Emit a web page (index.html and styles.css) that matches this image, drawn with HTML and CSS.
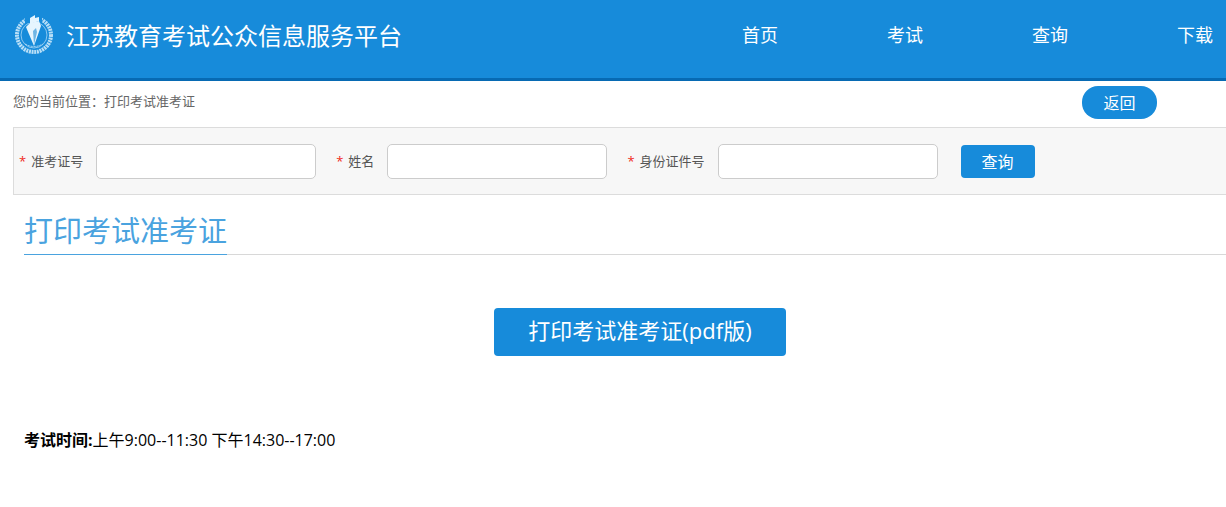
FILE: index.html
```
<!DOCTYPE html>
<html lang="zh-CN">
<head>
    <meta charset="UTF-8">
    <meta name="viewport" content="width=device-width, initial-scale=1.0">
    <title>打印考试准考证</title>
    <link rel="stylesheet" href="styles.css">
</head>
<body>
    <header class="header">
        <a class="brand" href="#">
            <svg class="logo" viewBox="0 0 40 40" aria-hidden="true">
                <circle class="wreath" cx="20" cy="21" r="17"/>
                <circle class="ring" cx="20" cy="21" r="13"/>
                <path class="gap" d="M11 0h17v9H11z"/>
                <path class="arc" d="M11 30q9 5 18 0"/>
                <path class="pen" d="M16 4l5-3v3l4-1v4l-9 3z"/>
                <path class="pen" d="M12 13l4-4 9-2 2 5-7 20z"/>
                <path class="nib" d="M20 31l-1-14 3-3 1 4z"/>
            </svg>
            <span>江苏教育考试公众信息服务平台</span>
        </a>
        <nav class="nav">
            <a href="#">首页</a>
            <a href="#">考试</a>
            <a href="#">查询</a>
            <a href="#">下载</a>
        </nav>
    </header>

    <div class="location">
        <span>您的当前位置：打印考试准考证</span>
        <button type="button" class="btn btn-back">返回</button>
    </div>

    <form class="search">
        <div class="field">
            <label for="ticket"><span class="star">*</span>准考证号</label>
            <input type="text" id="ticket">
        </div>
        <div class="field">
            <label for="name"><span class="star">*</span>姓名</label>
            <input type="text" id="name">
        </div>
        <div class="field">
            <label for="idcard"><span class="star">*</span>身份证件号</label>
            <input type="text" id="idcard">
        </div>
        <button type="button" class="btn btn-search">查询</button>
    </form>

    <main class="content">
        <div class="title">
            <h1>打印考试准考证</h1>
        </div>
        <div class="print">
            <button type="button" class="btn btn-print">打印考试准考证(pdf版)</button>
        </div>
        <p class="time"><strong>考试时间:</strong>上午9:00--11:30 下午14:30--17:00</p>
    </main>
</body>
</html>
```

FILE: styles.css
```
* {
    box-sizing: border-box;
}
body {
    margin: 0;
    background: #fff;
    color: #000;
    font-family: "Open Sans", "Noto Sans CJK SC", sans-serif;
    font-size: 16px;
}
a {
    color: #fff;
    text-decoration: none;
}

/* header */
.header {
    display: flex;
    justify-content: space-between;
    align-items: center;
    height: 81px;
    padding: 0 13px 10px 14px;
    background: #178bda;
    border-bottom: 3px solid #076ab3;
}
.brand {
    display: flex;
    align-items: center;
    gap: 12px;
    font-size: 24px;
    white-space: nowrap;
}
.logo {
    width: 40px;
    height: 40px;
}
.wreath {
    fill: none;
    stroke: #b9dff7;
    stroke-width: 4;
    stroke-dasharray: 2 0.7;
}
.ring {
    fill: none;
    stroke: #8cc8f0;
    stroke-width: 1;
}
.gap {
    fill: #178bda;
}
.arc {
    fill: none;
    stroke: #b9dff7;
    stroke-dasharray: 2 1;
}
.pen {
    fill: #e6f5fe;
}
.nib {
    fill: #6fb5e4;
}
.nav {
    display: flex;
    gap: 109px;
    font-size: 18px;
    white-space: nowrap;
}

/* buttons */
.btn {
    padding: 0 0 2px;
    border: none;
    border-radius: 4px;
    background: #178bda;
    color: #fff;
    font-family: inherit;
    font-size: 16px;
    cursor: pointer;
}
.btn-back {
    width: 75px;
    height: 33px;
    border-radius: 16px;
}
.btn-search {
    width: 74px;
    height: 33px;
    margin-left: 3px;
}
.btn-print {
    padding: 0 34px 6px;
    height: 48px;
    font-size: 22px;
}

/* current location */
.location {
    display: flex;
    justify-content: space-between;
    align-items: flex-start;
    height: 46px;
    padding: 5px 69px 0 13px;
    color: #666;
    font-size: 13px;
    line-height: 30px;
}

/* search bar */
.search {
    display: flex;
    align-items: center;
    gap: 20px;
    margin-left: 13px;
    padding: 16px 5px 15px;
    background: #f7f7f7;
    border: 1px solid #dcdcdc;
    border-right: none;
}
.field {
    display: flex;
    align-items: center;
    gap: 13px;
}
.field label {
    padding-bottom: 2px;
    color: #555;
    font-size: 13px;
    white-space: nowrap;
}
.field input {
    width: 220px;
    height: 35px;
    padding: 0 8px;
    border: 1px solid #ccc;
    border-radius: 5px;
    background: #fff;
    font-size: 14px;
}
.star {
    margin-right: 5px;
    color: #f02a1c;
}

/* content */
.content {
    padding-left: 24px;
}
.title {
    display: flex;
    margin-top: 12px;
    border-bottom: 1px solid #d8d8d8;
}
.title h1 {
    margin: 0 0 -1px;
    border-bottom: 1px solid #4aa3df;
    color: #4aa3df;
    font-size: 29px;
    font-weight: 400;
    line-height: 47px;
}
.print {
    padding: 53px 0 0 30px;
    text-align: center;
}
.time {
    margin: 72px 0 0;
    line-height: 24px;
}
```
